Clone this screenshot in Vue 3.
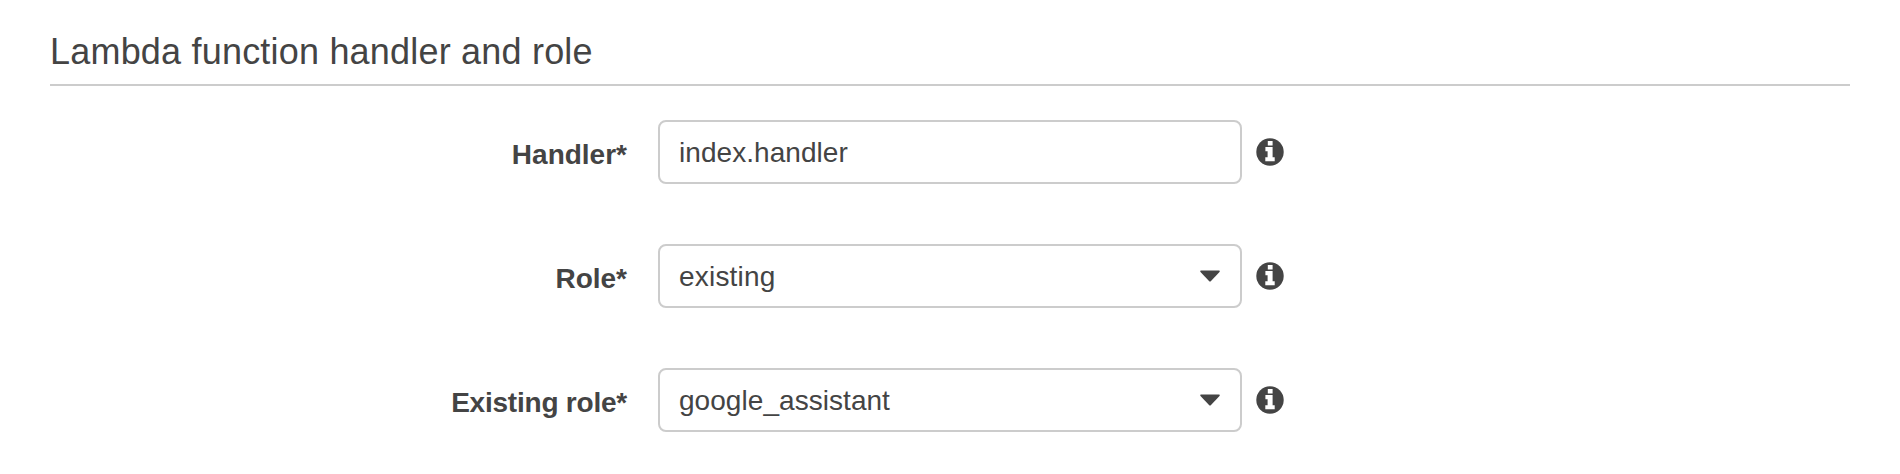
<script setup>
const fields = [
  { id: 'handler', label: 'Handler*', value: 'index.handler', select: false },
  { id: 'role', label: 'Role*', value: 'existing', select: true },
  { id: 'existing', label: 'Existing role*', value: 'google_assistant', select: true },
]
</script>

<template>
  <main class="panel">
    <h2 class="title"><span>Lambda function handler and role</span></h2>
    <div v-for="f in fields" :key="f.id" class="row">
      <div class="label"><span :class="'label-' + f.id">{{ f.label }}</span></div>
      <div class="control">
        <span class="value" :class="'value-' + f.id">{{ f.value }}</span>
        <svg v-if="f.select" class="caret" viewBox="0 0 20 12">
          <path d="M1 0.4H19Q20.4 0.7 19.5 1.9L11 11Q10 12 9 11L0.5 1.9Q-0.4 0.7 1 0.4Z" />
        </svg>
      </div>
      <svg class="info" viewBox="0 0 28 28">
        <circle cx="14" cy="14" r="13.7" />
        <path class="glyph" d="M11.8 3H16.6V7.6H11.8ZM9.4 9.1H16.6V19.2H18.7V23.2H9.3V19.2H11.6V13.2H9.4Z" />
      </svg>
    </div>
  </main>
</template>

<style>
body {
  background: #fff;
}
</style>

<style scoped>
.panel {
  box-sizing: border-box;
  height: 474px;
  padding: 30px 50px 0;
  overflow: hidden;
  color: #444;
  font-family: "Liberation Sans", Arial, sans-serif;
  font-size: 28px;
}
.title {
  box-sizing: border-box;
  height: 56px;
  margin: 0 0 34px;
  border-bottom: 2px solid #ccc;
  font-size: 36px;
  font-weight: 400;
  line-height: 44px;
  letter-spacing: 0.2px;
  white-space: nowrap;
}
.row {
  display: flex;
  align-items: center;
  height: 64px;
  margin-bottom: 60px;
}
.label {
  width: 577px;
  margin-right: 31px;
  padding-top: 6px;
  text-align: right;
  font-weight: 700;
  line-height: 32px;
  white-space: nowrap;
}
.label-existing {
  letter-spacing: -0.22px;
}
.control {
  box-sizing: border-box;
  display: flex;
  align-items: center;
  justify-content: space-between;
  width: 584px;
  height: 64px;
  padding: 0 20px 0 19px;
  border: 2px solid #ccc;
  border-radius: 8px;
  line-height: 32px;
}
.value {
  padding-top: 2px;
  letter-spacing: 0.07px;
}
.value-existing,
.value-handler {
  letter-spacing: 0.05px;
}
.value-role {
  letter-spacing: 0.2px;
}
.caret {
  width: 20px;
  height: 12px;
  fill: #444;
}
.info {
  width: 28px;
  height: 28px;
  margin-left: 14px;
  fill: #444;
}
.info .glyph {
  fill: #fff;
}
</style>
